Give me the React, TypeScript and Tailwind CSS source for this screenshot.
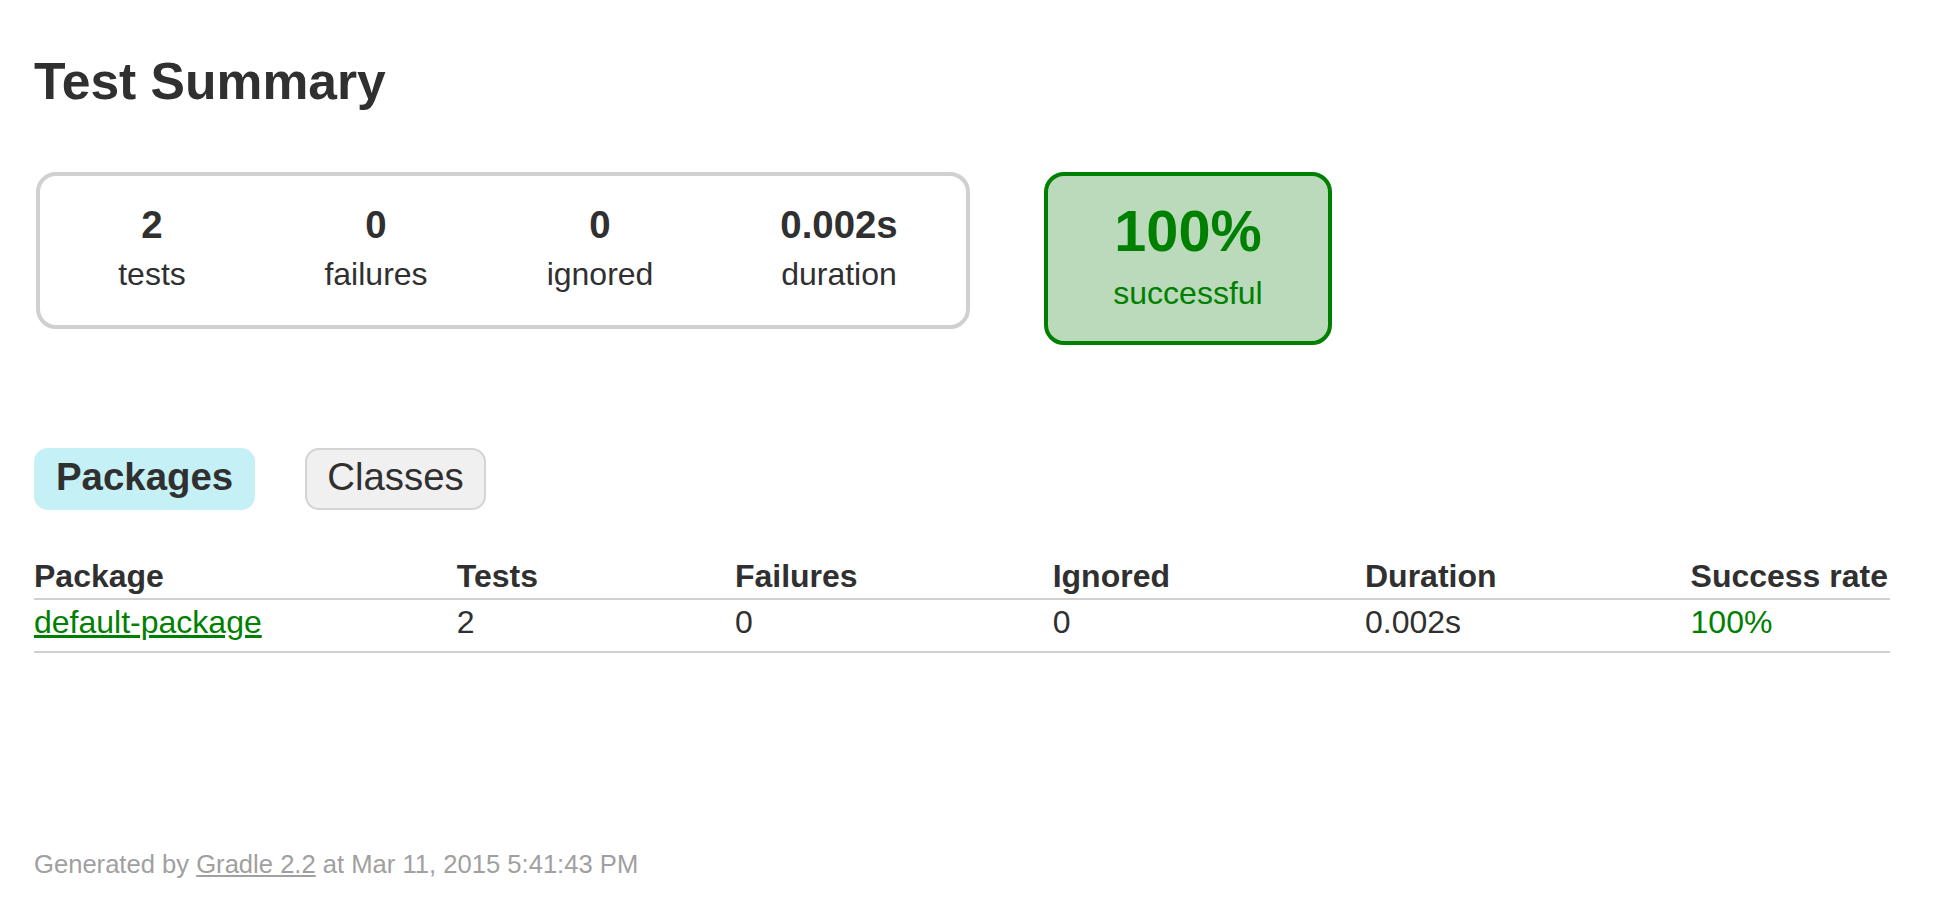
import React from 'react';

type Stat = { value: string; label: string; width: string };

const stats: Stat[] = [
  { value: '2', label: 'tests', width: 'w-[224px]' },
  { value: '0', label: 'failures', width: 'w-[224px]' },
  { value: '0', label: 'ignored', width: 'w-[224px]' },
  { value: '0.002s', label: 'duration', width: 'w-[254px]' },
];

// left padding per column; slightly wider than 6em to follow the reference's Helvetica widths
const columns = [
  { name: 'Package', pad: 'pl-0' },
  { name: 'Tests', pad: 'pl-[193px]' },
  { name: 'Failures', pad: 'pl-[195px]' },
  { name: 'Ignored', pad: 'pl-[193px]' },
  { name: 'Duration', pad: 'pl-[193px]' },
  { name: 'Success rate', pad: 'pl-[192px]' },
];

const row = [
  { value: 'default-package', link: true },
  { value: '2' },
  { value: '0' },
  { value: '0' },
  { value: '0.002s' },
  { value: '100%', success: true },
];

const InfoBox: React.FC<{ stat: Stat }> = ({ stat }) => (
  <div className={`${stat.width} pt-[27px] pb-[33px] text-center`}>
    <div className="text-[38.4px] font-bold leading-[44px] mb-[9px]">{stat.value}</div>
    <p className="text-[32px] leading-[36px]">{stat.label}</p>
  </div>
);

const App: React.FC = () => {
  return (
    <div className="min-h-screen bg-white pl-[34px] pt-[51px] font-['Liberation_Sans',Arial,sans-serif] text-[#303030]">
      <h1 className="text-[51.6px] font-bold leading-[60px] whitespace-nowrap">Test Summary</h1>

      {/* summary */}
      <div className="mt-[61px] flex items-start">
        <div className="ml-[2px] flex rounded-[20px] border-4 border-[#d0d0d0]">
          {stats.map(s => (
            <InfoBox key={s.label} stat={s} />
          ))}
        </div>
        <div className="ml-[74px] w-[288px] rounded-[20px] border-4 border-[#008000] bg-[#bbd9bb] pt-[22px] pb-[30px] text-center text-[#008000]">
          <div className="text-[57.6px] font-bold leading-[66px] mb-[11px]">100%</div>
          <p className="text-[32px] leading-[36px]">successful</p>
        </div>
      </div>

      {/* tabs */}
      <ul className="mt-[103px] flex gap-[50px] text-[38.4px] leading-[38px]">
        <li className="rounded-[14px] border-2 border-[#c5f0f5] bg-[#c5f0f5] px-[20px] pt-[8px] pb-[12px] font-bold">
          <a href="#tab0" className="block">Packages</a>
        </li>
        <li className="rounded-[14px] border-2 border-[#d4d4d4] bg-[#f0f0f0] px-[20px] pt-[8px] pb-[12px]">
          <a href="#tab1" className="block">Classes</a>
        </li>
      </ul>

      {/* packages table */}
      <table className="mt-[46px] border-collapse text-[32px]">
        <thead>
          <tr>
            {columns.map(c => (
              <th
                key={c.name}
                className={`${c.pad} pr-[2px] pt-[2px] pb-[4px] text-left font-bold leading-[36px] whitespace-nowrap border-b-2 border-[#d0d0d0]`}
              >
                {c.name}
              </th>
            ))}
          </tr>
        </thead>
        <tbody>
          <tr className="border-b-2 border-[#d0d0d0]">
            {row.map((cell, i) => (
              <td
                key={i}
                className={`${columns[i].pad} pr-[2px] pt-[4px] pb-[11px] leading-[36px] whitespace-nowrap ${cell.success ? 'text-[#008000]' : ''}`}
              >
                {cell.link ? (
                  <a href="#" className="text-[#008000] underline">{cell.value}</a>
                ) : (
                  cell.value
                )}
              </td>
            ))}
          </tr>
        </tbody>
      </table>

      <div className="mt-[196px] text-[25.6px] leading-[30px] whitespace-nowrap text-[#a0a0a0]">
        Generated by <a href="#" className="underline text-[#a0a0a0]">Gradle 2.2</a> at Mar 11, 2015 5:41:43 PM
      </div>
    </div>
  );
};

export default App;
